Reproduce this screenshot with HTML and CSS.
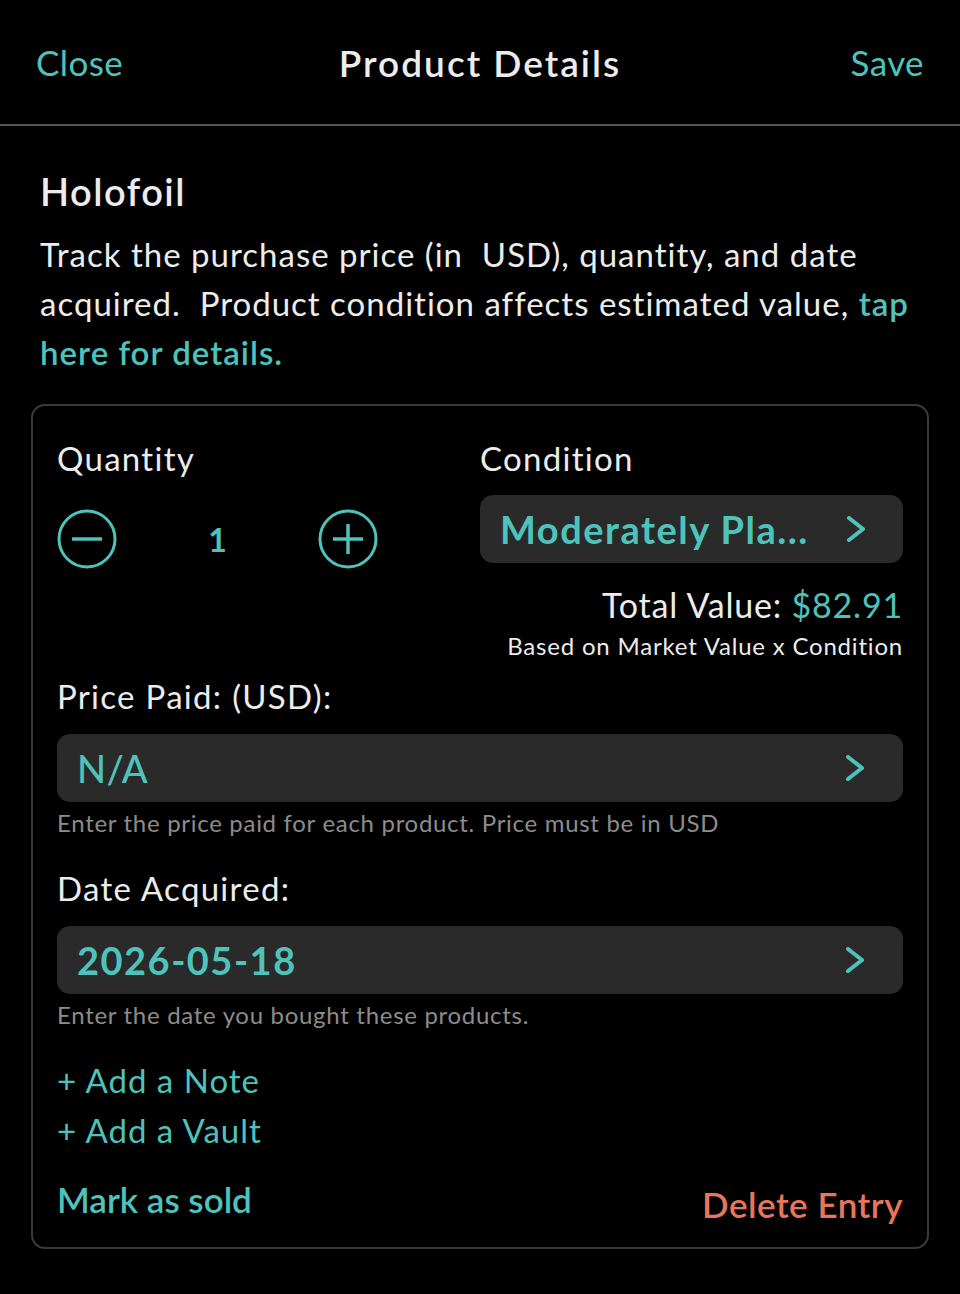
FILE: index.html
```html
<html lang="en">
<head>
    <meta charset="UTF-8">
    <meta name="viewport" content="width=device-width, initial-scale=1.0">
    <title>Product Details</title>
    <link rel="stylesheet" href="styles.css">
</head>
<body>

<div class="header">
    <a class="nav-link left">Close</a>
    <div class="header-title">Product Details</div>
    <a class="nav-link right">Save</a>
</div>

<div class="intro">
    <h2>Holofoil</h2>
    <p class="intro-text">Track the purchase price (in&nbsp; USD), quantity, and date acquired.&nbsp; Product condition affects estimated value, <a class="tap-link">tap here for details.</a></p>
</div>

<div class="card">
    <div class="top-grid">
        <div class="col">
            <div class="label">Quantity</div>
            <div class="stepper">
                <button class="step-btn" aria-label="Decrease">
                    <svg width="60" height="60" viewBox="0 0 60 60"><circle cx="30" cy="30" r="28" fill="none" stroke="currentColor" stroke-width="3"/><line x1="15" y1="30" x2="45" y2="30" stroke="currentColor" stroke-width="3.5"/></svg>
                </button>
                <div class="qty">1</div>
                <button class="step-btn" aria-label="Increase">
                    <svg width="60" height="60" viewBox="0 0 60 60"><circle cx="30" cy="30" r="28" fill="none" stroke="currentColor" stroke-width="3"/><line x1="15" y1="30" x2="45" y2="30" stroke="currentColor" stroke-width="3.5"/><line x1="30" y1="15" x2="30" y2="45" stroke="currentColor" stroke-width="3.5"/></svg>
                </button>
            </div>
        </div>
        <div class="col">
            <div class="label">Condition</div>
            <div class="select condition">
                <span class="select-value bold">Moderately Pla...</span>
                <svg class="chevron" width="20" height="26" viewBox="0 0 20 26"><polyline points="3,2 17,13 3,24" fill="none" stroke="currentColor" stroke-width="4" stroke-linecap="round" stroke-linejoin="round"/></svg>
            </div>
            <div class="total">Total Value: <span class="teal">$82.91</span></div>
            <div class="total-note">Based on Market Value x Condition</div>
        </div>
    </div>

    <div class="label spaced">Price Paid: (USD):</div>
    <div class="select">
        <span class="select-value medium">N/A</span>
        <svg class="chevron" width="20" height="26" viewBox="0 0 20 26"><polyline points="3,2 17,13 3,24" fill="none" stroke="currentColor" stroke-width="4" stroke-linecap="round" stroke-linejoin="round"/></svg>
    </div>
    <div class="hint">Enter the price paid for each product. Price must be in USD</div>

    <div class="label spaced-lg">Date Acquired:</div>
    <div class="select">
        <span class="select-value bold">2026-05-18</span>
        <svg class="chevron" width="20" height="26" viewBox="0 0 20 26"><polyline points="3,2 17,13 3,24" fill="none" stroke="currentColor" stroke-width="4" stroke-linecap="round" stroke-linejoin="round"/></svg>
    </div>
    <div class="hint">Enter the date you bought these products.</div>

    <div class="add-links">
        <a class="add-link">+ Add a Note</a>
        <a class="add-link">+ Add a Vault</a>
    </div>

    <div class="footer">
        <a class="sold-link">Mark as sold</a>
        <a class="delete-link">Delete Entry</a>
    </div>
</div>

</body>
</html>
```

FILE: styles.css
```css
body {
    font-family: Lato, "Open Sans", sans-serif;
    margin: 0;
    padding: 0;
    background-color: #000;
    color: #ececec;
}
a {
    cursor: pointer;
}
.teal {
    color: #4ec3bc;
}
.header {
    display: grid;
    grid-template-columns: 1fr auto 1fr;
    align-items: center;
    height: 124px;
    padding: 0 36px;
    border-bottom: 2px solid #555;
}
.nav-link {
    font-size: 35px;
    letter-spacing: 0.4px;
    color: #4ec3bc;
}
.nav-link.right {
    text-align: right;
}
.header-title {
    font-size: 37px;
    font-weight: 600;
    letter-spacing: 2px;
    color: #ececec;
}
.intro {
    padding: 0 30px 0 40px;
}
.intro h2 {
    font-size: 38px;
    font-weight: 600;
    letter-spacing: 1.5px;
    line-height: 46px;
    margin: 42px 0 16px;
}
.intro-text {
    font-size: 33px;
    letter-spacing: 1px;
    line-height: 49px;
    margin: 0 0 27px;
}
.tap-link {
    color: #4ec3bc;
    font-weight: 600;
}
.card {
    margin: 0 31px;
    border: 2px solid #3a3a3a;
    border-radius: 14px;
    padding: 32px 24px 23px 24px;
}
.top-grid {
    display: grid;
    grid-template-columns: 1fr 1fr;
}
.label {
    font-size: 33px;
    letter-spacing: 1.3px;
    line-height: 40px;
}
.label.spaced {
    margin-top: 15px;
}
.label.spaced-lg {
    margin-top: 30px;
}
.stepper {
    display: flex;
    align-items: center;
    margin-top: 31px;
    color: #4ec3bc;
}
.step-btn {
    background: none;
    border: none;
    padding: 0;
    width: 60px;
    height: 60px;
    color: #4ec3bc;
    display: block;
}
.step-btn svg {
    display: block;
}
.qty {
    width: 201px;
    text-align: center;
    font-size: 32px;
    font-weight: 700;
}
.select {
    display: flex;
    align-items: center;
    justify-content: space-between;
    height: 68px;
    margin-top: 18px;
    padding: 0 38px 0 20px;
    background: #2a2a2a;
    border-radius: 13px;
    color: #4ec3bc;
}
.select.condition {
    margin-top: 17px;
    padding-right: 20px;
    justify-content: flex-start;
}
.select.condition .chevron {
    margin-left: 37px;
}
.chevron {
    flex-shrink: 0;
}
.select-value {
    font-size: 38px;
    white-space: nowrap;
}
.select-value.bold {
    font-weight: 700;
    letter-spacing: 1.5px;
}
.select-value.medium {
    font-weight: 500;
    letter-spacing: 0.3px;
}
.total {
    text-align: right;
    font-size: 34px;
    letter-spacing: 0.8px;
    line-height: 40px;
    margin-top: 22px;
}
.total-note {
    text-align: right;
    font-size: 24px;
    letter-spacing: 0.8px;
    line-height: 30px;
    margin-top: 6px;
}
.hint {
    font-size: 24px;
    letter-spacing: 0.7px;
    line-height: 30px;
    margin-top: 6px;
    color: #8c8c8c;
}
.add-links {
    display: flex;
    flex-direction: column;
    gap: 10px;
    margin-top: 30px;
}
.add-link {
    font-size: 33px;
    letter-spacing: 1px;
    line-height: 40px;
    color: #4ec3bc;
}
.footer {
    display: flex;
    justify-content: space-between;
    align-items: flex-start;
    margin-top: 29px;
}
.sold-link {
    font-size: 35px;
    line-height: 40px;
    font-weight: 600;
    color: #4ec3bc;
}
.delete-link {
    font-size: 35px;
    line-height: 40px;
    font-weight: 600;
    letter-spacing: 0.5px;
    color: #e8765c;
    padding-top: 5px;
}
```
